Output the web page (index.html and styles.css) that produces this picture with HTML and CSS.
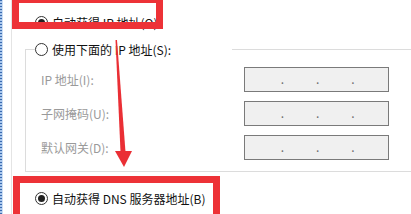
FILE: index.html
```html
<!DOCTYPE html>
<html lang="zh-CN">
<head>
    <meta charset="UTF-8">
    <title>Internet 协议版本 4 (TCP/IPv4) 属性</title>
    <link rel="stylesheet" href="styles.css">
</head>
<body>
    <div class="screen">
        <div class="edge"></div>
        <div class="panel">
            <div class="opt">
                <span class="radio checked"></span>
                <span>自动获得 IP 地址(O)</span>
            </div>

            <div class="group">
                <div class="group-head">
                    <span class="radio"></span>
                    <span>使用下面的 IP 地址(S):</span>
                </div>
                <div class="fields">
                    <div class="field-row">
                        <span class="label">IP 地址(I):</span>
                        <div class="ip"><span class="seg"></span><span class="dot">.</span><span class="seg"></span><span class="dot">.</span><span class="seg"></span><span class="dot">.</span></div>
                    </div>
                    <div class="field-row">
                        <span class="label">子网掩码(U):</span>
                        <div class="ip"><span class="seg"></span><span class="dot">.</span><span class="seg"></span><span class="dot">.</span><span class="seg"></span><span class="dot">.</span></div>
                    </div>
                    <div class="field-row">
                        <span class="label">默认网关(D):</span>
                        <div class="ip"><span class="seg"></span><span class="dot">.</span><span class="seg"></span><span class="dot">.</span><span class="seg"></span><span class="dot">.</span></div>
                    </div>
                </div>
            </div>

            <div class="opt opt-dns">
                <span class="radio checked"></span>
                <span>自动获得 DNS 服务器地址(B)</span>
            </div>
        </div>

        <!-- annotations drawn over the dialog -->
        <div class="mark mark-ip"></div>
        <div class="mark mark-dns"></div>
        <svg class="arrow" width="411" height="214" viewBox="0 0 411 214">
            <polygon points="115.5,40 117,40 125.5,152 120.5,152" fill="#ea2f35"/>
            <polygon points="115,151 132,151 124,167" fill="#ea2f35"/>
        </svg>
    </div>
</body>
</html>
```

FILE: styles.css
```css
body {
    margin: 0;
    background: #ffffff;
}
.screen {
    position: relative;
    width: 411px;
    height: 214px;
    overflow: hidden;
    display: flex;
    font-family: "Noto Sans CJK SC", "Liberation Sans", sans-serif;
    font-size: 12px;
    color: #111111;
    background: #ffffff;
}
.edge {
    width: 2px;
    flex-shrink: 0;
    background: repeating-linear-gradient(to bottom, #3a6bb0 0, #3a6bb0 1px, #a8c6ec 1px, #a8c6ec 3px);
    border-right: 1px solid #cfe0f5;
}
.panel {
    flex: 1;
    margin-left: 8px;
    padding-top: 15px;
    border-left: 1px solid #e4e4e4;
}
.opt {
    display: flex;
    align-items: center;
    gap: 4px;
    height: 15px;
    padding-left: 23px;
    white-space: nowrap;
}
.opt-dns {
    margin-top: 19px;
}
.radio {
    width: 13px;
    height: 13px;
    box-sizing: border-box;
    border: 1px solid #333333;
    border-radius: 50%;
    background: #ffffff;
    flex-shrink: 0;
    display: flex;
    align-items: center;
    justify-content: center;
}
.radio.checked::after {
    content: "";
    width: 7px;
    height: 7px;
    border-radius: 50%;
    background: #222222;
}
.group {
    width: 420px;
    margin-top: 19px;
    margin-left: 13px;
    border: 1px solid #dcdcdc;
    border-right: none;
    padding-bottom: 11px;
}
.group-head {
    display: flex;
    align-items: center;
    gap: 4px;
    height: 15px;
    width: 197px;
    margin-top: -8px;
    margin-left: 9px;
    background: #ffffff;
    white-space: nowrap;
}
.fields {
    display: flex;
    flex-direction: column;
    gap: 9px;
    margin-top: 10px;
    padding-left: 15px;
}
.field-row {
    display: flex;
    align-items: center;
    height: 25px;
}
.label {
    width: 203px;
    color: #9a9a9a;
    white-space: nowrap;
}
.ip {
    display: flex;
    width: 145px;
    height: 25px;
    box-sizing: border-box;
    padding-left: 4px;
    border: 1px solid #7a7a7a;
    background: #f0f0f0;
    line-height: 21px;
    font-size: 12px;
    color: #6d6d6d;
}
.seg {
    width: 31.3px;
}
.dot {
    width: 4px;
    text-align: center;
}
.mark {
    position: absolute;
    box-sizing: border-box;
    border: 7px solid #ed3237;
}
.mark-ip {
    top: -4px;
    left: 12px;
    width: 151px;
    height: 33px;
}
.mark-dns {
    top: 176px;
    left: 13px;
    width: 207px;
    height: 45px;
}
.arrow {
    position: absolute;
    top: 0;
    left: 0;
    pointer-events: none;
}
```
